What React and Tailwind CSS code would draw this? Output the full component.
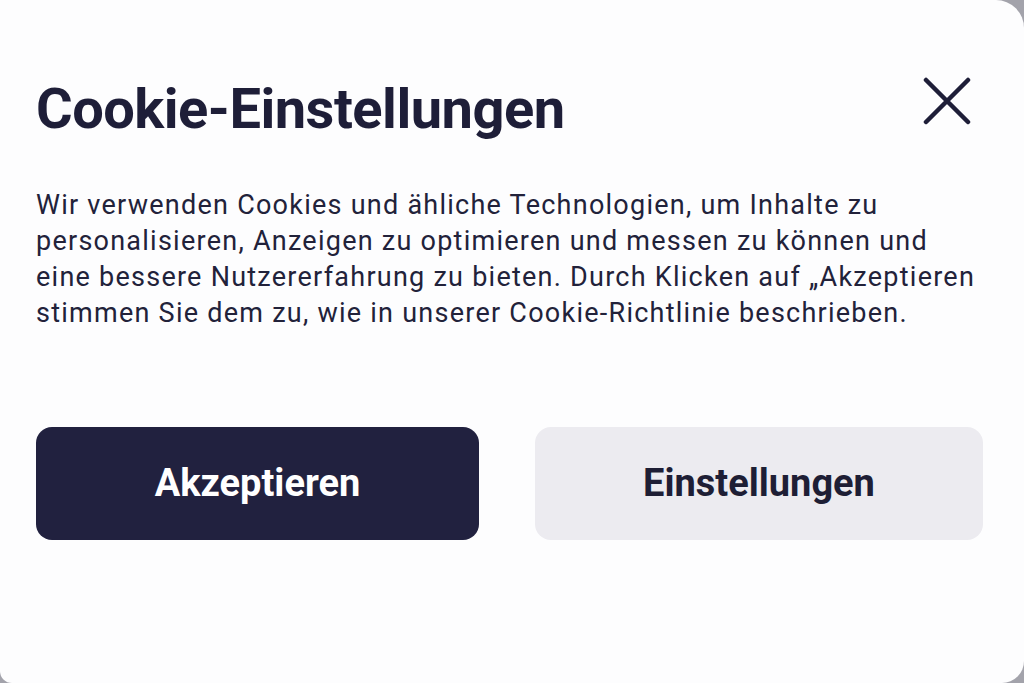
import React from 'react';

// Cookie consent dialog (German)
function CloseIcon() {
  return (
    <svg width="48" height="48" viewBox="0 0 48 48" fill="none" stroke="#1e1e38" strokeWidth="4.5" strokeLinecap="round">
      <path d="M3 3L45 45M45 3L3 45" />
    </svg>
  );
}

export default function App() {
  return (
    <div className="w-[1024px] h-[683px] bg-[#a3a3ab] overflow-hidden">
      <div
        className="w-full h-full bg-[#fdfdfe] rounded-tr-[28px] rounded-br-[22px] rounded-bl-[12px] flex flex-col pl-[36px] pr-[41px] pt-[77px]"
        style={{ fontFamily: 'Roboto, "Open Sans", sans-serif' }}
      >
        <div className="flex items-start justify-between">
          <h1 className="text-[56px] leading-[64px] font-bold text-[#1e1e38] tracking-[-0.5px] whitespace-nowrap">Cookie-Einstellungen</h1>
          <div className="mr-[12px]">
            <CloseIcon />
          </div>
        </div>

        <p className="mt-[46px] w-[975px] text-[27px] leading-[36px] tracking-[1.25px] text-[#22223a]">
          Wir verwenden Cookies und ähliche Technologien, um Inhalte zu<br />
          personalisieren, Anzeigen zu optimieren und messen zu können und<br />
          eine bessere Nutzererfahrung zu bieten. Durch Klicken auf „Akzeptieren<br />
          stimmen Sie dem zu, wie in unserer Cookie-Richtlinie beschrieben.
        </p>

        <div className="mt-[96px] flex gap-[56px]">
          <button className="w-[443px] h-[113px] rounded-[16px] bg-[#21213f] text-white text-[38px] font-bold">
            Akzeptieren
          </button>
          <button className="flex-1 h-[113px] rounded-[16px] bg-[#ecebf0] text-[#1e1e35] text-[38px] font-bold">
            Einstellungen
          </button>
        </div>
      </div>
    </div>
  );
}
